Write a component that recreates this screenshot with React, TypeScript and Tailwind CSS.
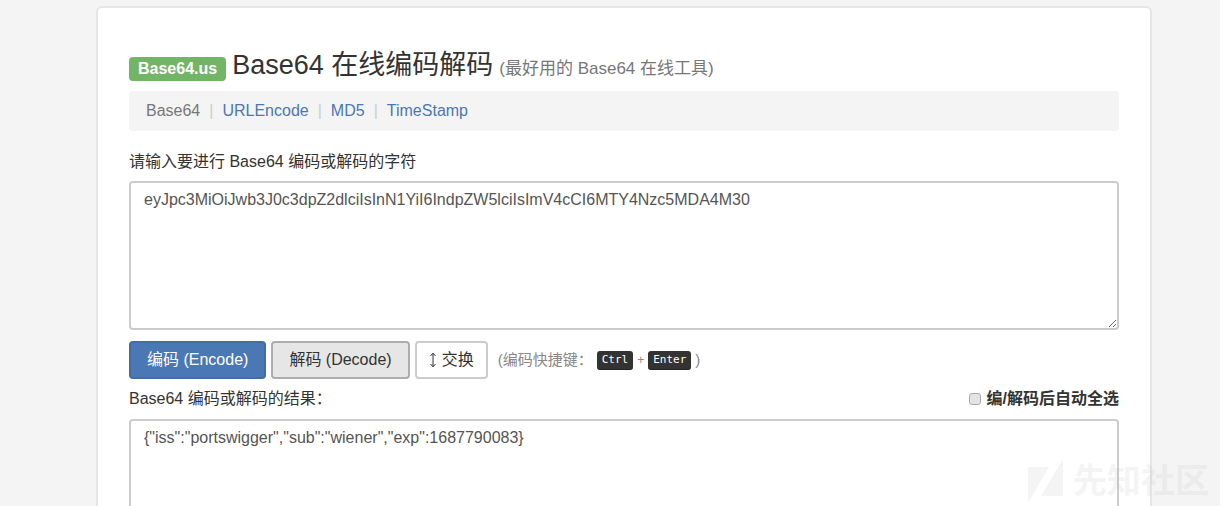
import { useState } from "react";

const links = ["URLEncode", "MD5", "TimeStamp"];

function Key({ children }: { children: string }) {
  return (
    <kbd className="rounded-[3px] border-b border-[#222] bg-[#333] px-[5px] font-['DejaVu_Sans_Mono',monospace] text-[11px] leading-[18px] text-white">
      {children}
    </kbd>
  );
}

function Watermark() {
  return (
    <div
      aria-hidden="true"
      className="pointer-events-none absolute right-[18px] bottom-0 flex items-center gap-[10px] text-[#a0a0a0] opacity-10"
    >
      <svg width="35" height="45" viewBox="0 0 35 45" fill="currentColor">
        <path d="M0 8H21L0 44Z" />
        <path d="M35 0V37H13Z" />
      </svg>
      <span className="text-[34px] leading-[50px] font-bold">先知社区</span>
    </div>
  );
}

export default function App() {
  const [source, setSource] = useState(
    "eyJpc3MiOiJwb3J0c3dpZ2dlciIsInN1YiI6IndpZW5lciIsImV4cCI6MTY4Nzc5MDA4M30",
  );
  const [result, setResult] = useState(
    '{"iss":"portswigger","sub":"wiener","exp":1687790083}',
  );

  const encode = () =>
    setResult(
      btoa(String.fromCharCode(...new TextEncoder().encode(source))),
    );
  const decode = () => {
    try {
      const bytes = Uint8Array.from(atob(source), (c) => c.charCodeAt(0));
      setResult(new TextDecoder().decode(bytes));
    } catch {
      setResult("");
    }
  };
  const swap = () => {
    setSource(result);
    setResult(source);
  };

  return (
    <div className="relative h-screen overflow-hidden bg-white pr-[7px] font-['Liberation_Sans','Noto_Sans_CJK_SC',sans-serif] text-base leading-[22px] text-[#333]">
      <div className="h-full bg-[#f4f4f4] pt-[6px] pr-6 pl-[52px]">
        <main className="mx-auto max-w-[1056px] rounded-md border-2 border-[#e6e6e6] bg-white px-[31px] pt-9 pb-8">
          <h1 className="flex items-baseline gap-[6px] text-[27px] leading-[42px]">
            <span className="rounded-[4px] bg-[#72b566] px-[9px] text-base leading-6 font-bold text-white">
              Base64.us
            </span>
            <span>Base64 在线编码解码</span>
            <small className="text-[17px] text-[#777]">
              (最好用的 Base64 在线工具)
            </small>
          </h1>

          <nav className="mt-px rounded-[4px] bg-[#f4f4f4] px-[17px] py-[9px]">
            <ul className="flex">
              <li className="text-[#777]">Base64</li>
              {links.map((name) => (
                <li
                  key={name}
                  className="before:px-[9px] before:text-[#ccc] before:content-['|']"
                >
                  <a href={`#${name}`} className="text-[#4a78b5]">
                    {name}
                  </a>
                </li>
              ))}
            </ul>
          </nav>

          <label htmlFor="source" className="mt-5 block">
            请输入要进行 Base64 编码或解码的字符
          </label>
          <textarea
            id="source"
            spellCheck={false}
            value={source}
            onChange={(e) => setSource(e.target.value)}
            className="mt-2 block h-[149px] w-full resize rounded-[4px] border-2 border-[#ccc] px-[13px] py-[6px] text-[#555]"
          />

          <div className="mt-[11px] flex items-center gap-[5px]">
            <button
              type="button"
              onClick={encode}
              className="h-[38px] rounded-[4px] border-2 border-[#426da4] bg-[#4a78b5] px-4 text-white"
            >
              编码 (Encode)
            </button>
            <button
              type="button"
              onClick={decode}
              className="h-[38px] rounded-[4px] border-2 border-[#adadad] bg-[#e6e6e6] px-4"
            >
              解码 (Decode)
            </button>
            <button
              type="button"
              onClick={swap}
              className="flex h-[38px] items-center gap-[5px] rounded-[4px] border-2 border-[#ccc] bg-white px-3"
            >
              <svg
                width="8"
                height="16"
                viewBox="0 0 8 16"
                fill="none"
                stroke="currentColor"
                aria-hidden="true"
              >
                <path d="M4 1.5V14.5M1.5 4L4 1.2L6.5 4M1.5 12L4 14.8L6.5 12" />
              </svg>
              交换
            </button>
            <p className="ml-[5px] flex items-center gap-1 text-[15px] text-[#888]">
              <span>(编码快捷键：</span>
              <Key>Ctrl</Key>
              <span className="text-[12px]">+</span>
              <Key>Enter</Key>
              <span>)</span>
            </p>
          </div>

          <div className="mt-[9px] flex items-center justify-between">
            <label htmlFor="result">Base64 编码或解码的结果：</label>
            <label className="flex items-center gap-[6px] font-bold">
              <input
                type="checkbox"
                className="size-3 appearance-none rounded-[3px] border border-[#aaa] bg-[#e4e4e4] checked:bg-[#4a78b5]"
              />
              编/解码后自动全选
            </label>
          </div>
          <textarea
            id="result"
            spellCheck={false}
            value={result}
            onChange={(e) => setResult(e.target.value)}
            className="mt-[9px] block h-[149px] w-full resize rounded-[4px] border-2 border-[#ccc] px-[13px] py-[6px] text-[#555]"
          />
        </main>
      </div>
      <Watermark />
    </div>
  );
}
